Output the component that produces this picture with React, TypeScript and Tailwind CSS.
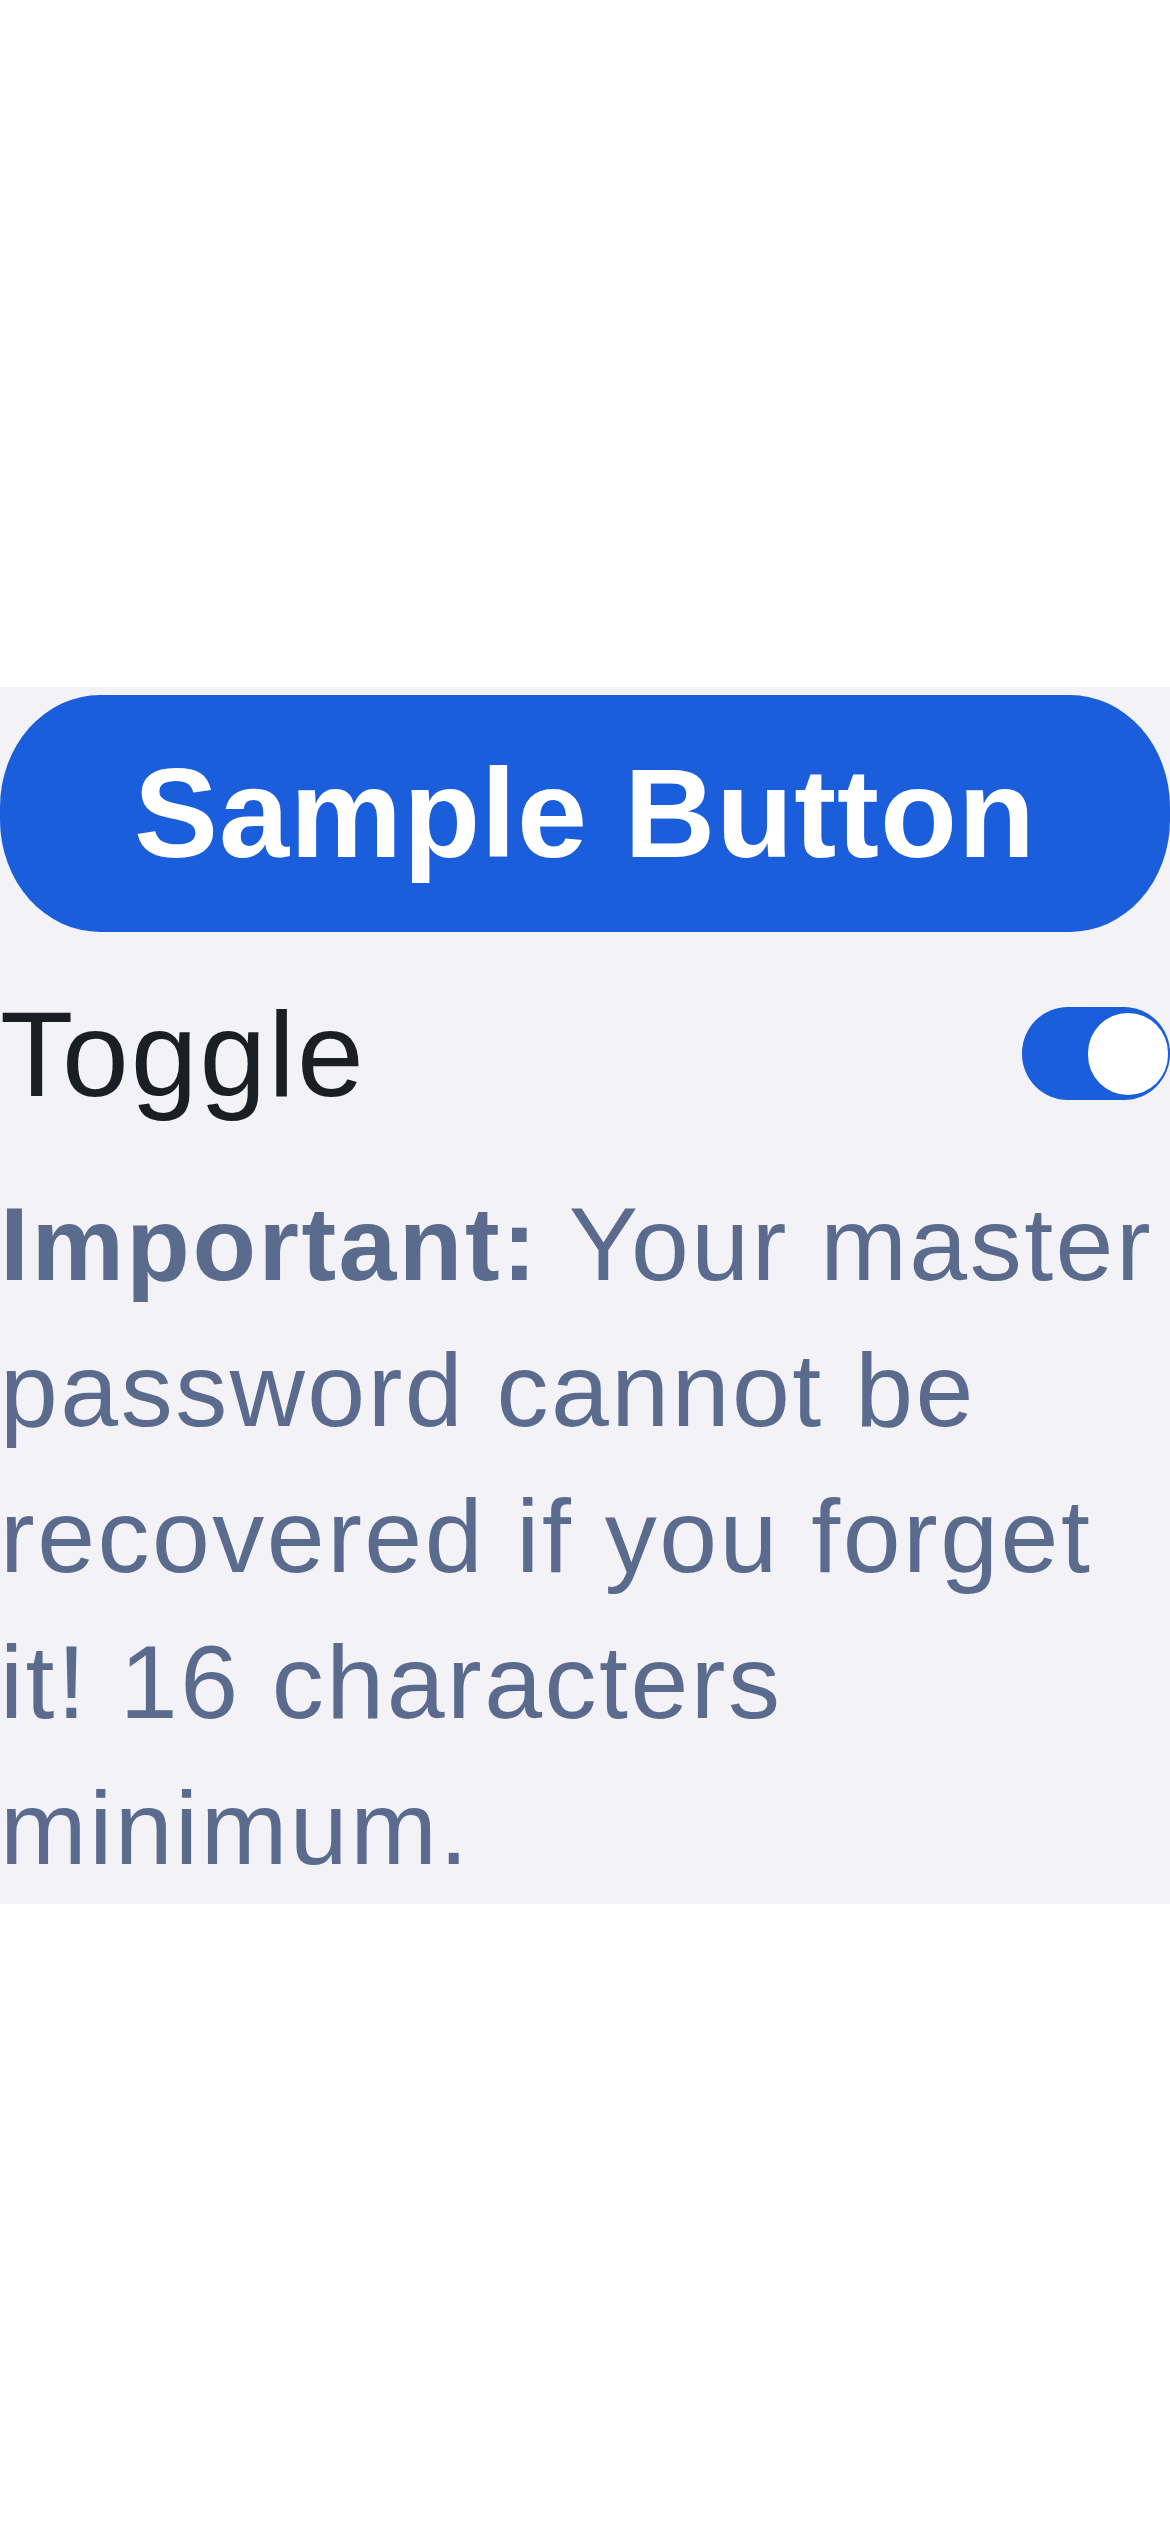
import React from "react";

export default function App() {
  return (
    <div className="w-[1170px] h-[2532px] bg-white overflow-hidden" style={{ fontFamily: '"Liberation Sans", Arial, sans-serif' }}>
      <div className="h-[687px]" />
      <div className="bg-[#f2f2f7] pt-[8px] pb-[3px] overflow-hidden">
        <button className="w-full h-[237px] bg-[#1a5edb] rounded-[100px/112px] flex items-center justify-center text-white font-bold text-[126px] tracking-[1px] leading-none">
          Sample Button
        </button>
        <div className="mt-[75px] h-[93px] flex items-center justify-between">
          <span className="text-[120px] leading-[120px] tracking-[2px] text-[#1c1e26]">Toggle</span>
          <div className="w-[148px] h-[93px] rounded-[46px] bg-[#1a5edb] flex items-center justify-end pr-[2px]">
            <div className="w-[80px] h-[82px] rounded-full bg-white" />
          </div>
        </div>
        <p className="mt-[71px] text-[104px] leading-[146px] tracking-[2.5px] text-[#5a6b8d]">
          <span className="font-bold">Important:</span> Your master
          <br />
          password cannot be
          <br />
          recovered if you forget
          <br />
          it! 16 characters
          <br />
          minimum.
        </p>
      </div>
    </div>
  );
}
